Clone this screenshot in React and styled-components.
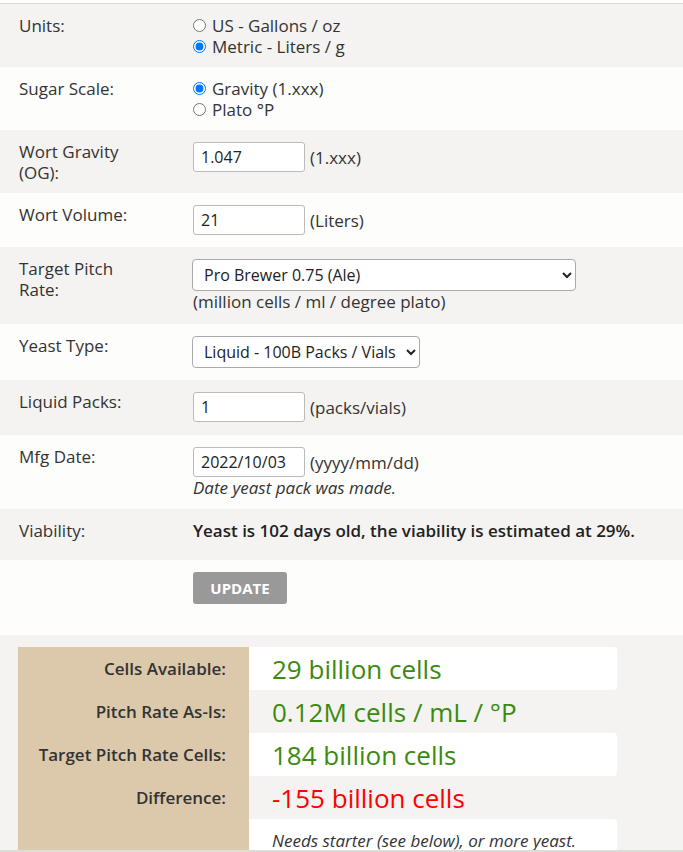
import styled, { createGlobalStyle } from "styled-components";

const GlobalStyle = createGlobalStyle`
  * { box-sizing: border-box; }
  body {
    margin: 0;
    font-family: "Open Sans", "Liberation Sans", sans-serif;
    color: #333;
    background: #fdfdfc;
  }
`;

export default function App() {
  return (
    <Page>
      <GlobalStyle />
      <Form>
        <Row>
          <Label>Units:</Label>
          <Field>
            <Radio>
              <input type="radio" name="units" />
              US - Gallons / oz
            </Radio>
            <Radio>
              <input type="radio" name="units" defaultChecked />
              Metric - Liters / g
            </Radio>
          </Field>
        </Row>
        <Row $light>
          <Label>Sugar Scale:</Label>
          <Field>
            <Radio>
              <input type="radio" name="scale" defaultChecked />
              Gravity (1.xxx)
            </Radio>
            <Radio>
              <input type="radio" name="scale" />
              Plato °P
            </Radio>
          </Field>
        </Row>
        <Row>
          <Label>Wort Gravity (OG):</Label>
          <Field>
            <Inline>
              <TextInput defaultValue="1.047" />
              <Hint>(1.xxx)</Hint>
            </Inline>
          </Field>
        </Row>
        <Row $light $bottom={12}>
          <Label>Wort Volume:</Label>
          <Field>
            <Inline>
              <TextInput defaultValue="21" />
              <Hint>(Liters)</Hint>
            </Inline>
          </Field>
        </Row>
        <Row $bottom={12}>
          <Label>Target Pitch Rate:</Label>
          <Field>
            <Select $width={384} defaultValue="pro">
              <option value="pro">Pro Brewer 0.75 (Ale)</option>
            </Select>
            <Note>(million cells / ml / degree plato)</Note>
          </Field>
        </Row>
        <Row $light $bottom={12}>
          <Label>Yeast Type:</Label>
          <Field>
            <Select $width={228} defaultValue="liquid">
              <option value="liquid">Liquid - 100B Packs / Vials</option>
            </Select>
          </Field>
        </Row>
        <Row $bottom={13}>
          <Label>Liquid Packs:</Label>
          <Field>
            <Inline>
              <TextInput defaultValue="1" />
              <Hint>(packs/vials)</Hint>
            </Inline>
          </Field>
        </Row>
        <Row $light $bottom={11}>
          <Label>Mfg Date:</Label>
          <Field>
            <Inline>
              <TextInput defaultValue="2022/10/03" />
              <Hint>(yyyy/mm/dd)</Hint>
            </Inline>
            <Note $italic>Date yeast pack was made.</Note>
          </Field>
        </Row>
        <Row $bottom={19}>
          <Label>Viability:</Label>
          <Field>
            <Strong>Yeast is 102 days old, the viability is estimated at 29%.</Strong>
          </Field>
        </Row>
        <Row $light $bottom={31}>
          <Label />
          <Field>
            <Button>UPDATE</Button>
          </Field>
        </Row>
      </Form>

      <Results>
        <Table>
          <ResultRow $white>
            <ResultLabel>Cells Available:</ResultLabel>
            <ResultValue>29 billion cells</ResultValue>
          </ResultRow>
          <ResultRow>
            <ResultLabel>Pitch Rate As-Is:</ResultLabel>
            <ResultValue>0.12M cells / mL / °P</ResultValue>
          </ResultRow>
          <ResultRow $white>
            <ResultLabel>Target Pitch Rate Cells:</ResultLabel>
            <ResultValue>184 billion cells</ResultValue>
          </ResultRow>
          <ResultRow>
            <ResultLabel>Difference:</ResultLabel>
            <ResultValue $bad>-155 billion cells</ResultValue>
          </ResultRow>
          <ResultRow $white>
            <ResultLabel />
            <ResultNote>Needs starter (see below), or more yeast.</ResultNote>
          </ResultRow>
        </Table>
      </Results>
    </Page>
  );
}

const Page = styled.div`
  height: 852px;
  overflow: hidden;
  display: flex;
  flex-direction: column;
  padding-top: 3px;
  border-bottom: 2px solid #dcdcd8;
`;

const Form = styled.div`
  border-top: 1px solid #d9d9d5;
  display: flex;
  flex-direction: column;
`;

const Row = styled.div`
  display: grid;
  grid-template-columns: 174px 1fr;
  padding: 11px 19px ${(p) => (p.$bottom ? p.$bottom : 10)}px;
  background: ${(p) => (p.$light ? "#fdfdfc" : "#f4f3f1")};
  font-size: 17px;
  line-height: 21px;
`;

const Label = styled.div`
  padding-right: 36px;
`;

const Field = styled.div`
  display: flex;
  flex-direction: column;
  align-items: flex-start;
`;

const Radio = styled.label`
  display: flex;
  align-items: center;
  gap: 6px;

  input {
    margin: 0;
    width: 13px;
    height: 13px;
  }
`;

const Inline = styled.div`
  display: flex;
  align-items: center;
  gap: 5px;
  margin-top: 1px;
`;

const TextInput = styled.input`
  width: 112px;
  height: 30px;
  border: 1px solid #bbb;
  border-radius: 3px;
  padding: 0 7px;
  font-family: inherit;
  font-size: 16px;
  color: #222;
  background: #fff;
`;

const Hint = styled.span`
  color: #333;
`;

const Select = styled.select`
  width: ${(p) => p.$width}px;
  height: 32px;
  margin: 1px 0 0 -1px;
  border: 1px solid #aaa;
  border-radius: 4px;
  padding: 0 7px;
  font-family: inherit;
  font-size: 16px;
  color: #222;
  background: #fff;
`;

const Note = styled.div`
  font-style: ${(p) => (p.$italic ? "italic" : "normal")};
`;

const Strong = styled.div`
  font-weight: 600;
  color: #222;
`;

const Button = styled.button`
  width: 94px;
  height: 32px;
  margin-top: 1px;
  border: none;
  border-radius: 3px;
  background: #999;
  color: #fff;
  font-family: inherit;
  font-size: 15px;
  font-weight: 700;
  padding: 0;
`;

const Results = styled.div`
  flex: 1;
  background: #f4f3f1;
  padding: 12px 66px 0 18px;
`;

const Table = styled.div`
  display: flex;
  flex-direction: column;
`;

const ResultRow = styled.div`
  display: grid;
  grid-template-columns: 231px 1fr;
  height: 43px;
  flex-shrink: 0;

  & > :last-child {
    background: ${(p) => (p.$white ? "#fff" : "transparent")};
    border-radius: 0 4px 4px 0;
  }
`;

const ResultLabel = styled.div`
  background: #dcc9ab;
  display: flex;
  align-items: center;
  justify-content: flex-end;
  padding-right: 23px;
  font-size: 17px;
  font-weight: 600;
  color: #333;
`;

const ResultValue = styled.div`
  display: flex;
  align-items: center;
  padding-left: 23px;
  font-size: 26px;
  font-weight: 500;
  color: ${(p) => (p.$bad ? "#ff0000" : "#3b8a10")};
`;

const ResultNote = styled.div`
  display: flex;
  align-items: center;
  padding-left: 23px;
  font-size: 17px;
  font-style: italic;
  color: #333;
`;
